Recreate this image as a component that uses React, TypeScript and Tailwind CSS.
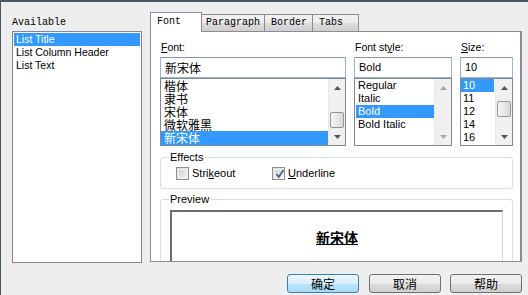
import React from "react";

const UI = "font-['Liberation_Sans','Noto_Sans_CJK_SC',sans-serif] text-[10.5px] text-black";
const CJK = "font-['Noto_Sans_CJK_SC',sans-serif] text-[12px]";
const MONO = "font-['Liberation_Mono',monospace] text-[10px] text-black";

function Arrow({ up, disabled }: { up?: boolean; disabled?: boolean }) {
  return (
    <div className="h-[17px] flex items-center justify-center">
      <svg width="7" height="4" viewBox="0 0 7 4">
        <path d={up ? "M3.5 0 L7 4 L0 4 Z" : "M0 0 L7 0 L3.5 4 Z"} fill={disabled ? "#a8a8a8" : "#555555"} />
      </svg>
    </div>
  );
}

function Scrollbar({ thumb, disabled }: { thumb?: string; disabled?: boolean }) {
  return (
    <div className="relative w-[17px] h-full shrink-0 bg-[#f0f0f0] border-l border-[#e9e9e9] flex flex-col justify-between">
      <Arrow up disabled={disabled} />
      {thumb && (
        <div
          className={
            "absolute left-[1px] right-[1px] rounded-[2px] border border-[#959595] bg-[linear-gradient(to_right,#f5f5f5,#e4e4e4_60%,#d9d9d9)] " +
            thumb
          }
        />
      )}
      <Arrow disabled={disabled} />
    </div>
  );
}

function Row({ children, selected, className }: { children: React.ReactNode; selected?: boolean; className?: string }) {
  return (
    <div
      className={
        "h-[13px] leading-[13px] whitespace-nowrap " +
        (selected ? "bg-[#3399ff] text-white " : "text-black ") +
        (className ?? "")
      }
    >
      {children}
    </div>
  );
}

function Label({ children }: { children: React.ReactNode }) {
  return <div className={UI + " h-[25px] pt-[9px] leading-[12px] pl-[1px]"}>{children}</div>;
}

function Input({ children, cjk }: { children: React.ReactNode; cjk?: boolean }) {
  return (
    <div
      className={
        "h-[21px] border border-[#98b4d0] border-t-[#7f9ab8] rounded-[1px] bg-white pl-[4px] flex items-center " +
        (cjk ? CJK : UI + " text-[11px]")
      }
    >
      {children}
    </div>
  );
}

function Checkbox({ checked }: { checked?: boolean }) {
  return (
    <div className="w-[13px] h-[13px] border border-[#8e8f8f] bg-[linear-gradient(135deg,#dcdcdc,#f6f6f6)] p-[1px] shrink-0">
      <div className="w-full h-full border border-[#f4f4f4] bg-[linear-gradient(135deg,#cfcfcf,#f2f2f2)] relative">
        {checked && (
          <svg className="absolute left-[0px] top-[-1px]" width="10" height="10" viewBox="0 0 10 10">
            <path d="M1.5 5 L3.8 8 L8.5 1" stroke="#4a5f97" strokeWidth="1.8" fill="none" />
          </svg>
        )}
      </div>
    </div>
  );
}

function Button({ children, primary, className }: { children: React.ReactNode; primary?: boolean; className?: string }) {
  return (
    <div
      className={
        CJK +
        " w-[72px] h-[19px] rounded-[3px] border flex items-center justify-center leading-none text-black " +
        (primary
          ? "border-[#3c7fb1] bg-[linear-gradient(to_bottom,#eaf6fd_0%,#d9f0fc_50%,#bee6fd_51%,#a7d9f5_100%)] "
          : "border-[#707070] bg-[linear-gradient(to_bottom,#f2f2f2_0%,#ebebeb_50%,#dddddd_51%,#cfcfcf_100%)] ") +
        (className ?? "")
      }
    >
      {children}
    </div>
  );
}

export default function App() {
  return (
    <div className="w-[528px] h-[295px] bg-[#eeeeee] border-t-2 border-l border-[#4b5967] overflow-hidden flex flex-col">
      <div className="mt-[10px] ml-[11px] flex gap-[8px]">
        {/* Left column */}
        <div className="w-[130px] flex flex-col">
          <div className={MONO + " h-[19px] leading-[19px] pt-[1px]"}>Available</div>
          <div className={UI + " h-[232px] border border-[#828790] bg-white p-[1px]"}>
            <Row selected className="pl-[2px]">List Title</Row>
            <Row className="pl-[2px]">List Column Header</Row>
            <Row className="pl-[2px]">List Text</Row>
          </div>
        </div>

        {/* Tab control */}
        <div className="w-[372px] flex flex-col">
          <div className={MONO + " h-[19px] flex items-end"}>
            <div className="relative z-10 -mb-px w-[52px] h-[20px] bg-white border border-b-0 border-[#898c95] pl-[6px] pt-[3px] leading-[12px]">
              Font
            </div>
            <div className="w-[63px] h-[17px] border border-b-0 border-l-0 border-[#898c95] bg-[linear-gradient(to_bottom,#f2f2f2,#ebebeb_50%,#dddddd_51%,#cfcfcf)] pl-[4px] leading-[16px]">
              Paragraph
            </div>
            <div className="w-[48px] h-[17px] border border-b-0 border-l-0 border-[#898c95] bg-[linear-gradient(to_bottom,#f2f2f2,#ebebeb_50%,#dddddd_51%,#cfcfcf)] pl-[6px] leading-[16px]">
              Border
            </div>
            <div className="w-[46px] h-[17px] border border-b-0 border-l-0 border-[#898c95] bg-[linear-gradient(to_bottom,#f2f2f2,#ebebeb_50%,#dddddd_51%,#cfcfcf)] pl-[6px] leading-[16px]">
              Tabs
            </div>
          </div>
          <div className="h-[231px] border border-r-2 border-[#898c95] bg-white overflow-hidden pl-[9px] pr-[7px]">
            <div className="flex gap-[8px]">
              {/* Font */}
              <div className="w-[186px] flex flex-col">
                <Label>
                  <span className="underline">F</span>ont:
                </Label>
                <Input cjk>新宋体</Input>
                <div className={CJK + " h-[68px] border border-[#828790] flex"}>
                  <div className="flex-1">
                    <Row className="pl-[3px]">楷体</Row>
                    <Row className="pl-[3px]">隶书</Row>
                    <Row className="pl-[3px]">宋体</Row>
                    <Row className="pl-[3px]">微软雅黑</Row>
                    <Row selected className="pl-[3px] h-[14px]">新宋体</Row>
                  </div>
                  <Scrollbar thumb="top-[33px] h-[16px]" />
                </div>
              </div>
              {/* Style */}
              <div className="w-[98px] flex flex-col">
                <Label>
                  Font st<span className="underline">y</span>le:
                </Label>
                <Input>Bold</Input>
                <div className={UI + " text-[11px] h-[68px] border border-[#828790] flex"}>
                  <div className="flex-1 pl-[1px]">
                    <Row className="pl-[2px]">Regular</Row>
                    <Row className="pl-[2px]">Italic</Row>
                    <Row selected className="pl-[2px]">Bold</Row>
                    <Row className="pl-[2px]">Bold Italic</Row>
                  </div>
                  <Scrollbar disabled />
                </div>
              </div>
              {/* Size */}
              <div className="w-[53px] flex flex-col">
                <Label>
                  <span className="underline">S</span>ize:
                </Label>
                <Input>10</Input>
                <div className={UI + " text-[11px] h-[68px] border border-[#828790] flex"}>
                  <div className="flex-1 pr-[1px]">
                    <Row selected className="pl-[2px]">10</Row>
                    <Row className="pl-[2px]">11</Row>
                    <Row className="pl-[2px]">12</Row>
                    <Row className="pl-[2px]">14</Row>
                    <Row className="pl-[2px]">16</Row>
                  </div>
                  <Scrollbar thumb="top-[22px] h-[16px]" />
                </div>
              </div>
            </div>

            {/* Effects */}
            <div className={UI + " relative mt-[11px] w-[353px] h-[32px] border border-[#d5dfe5] rounded-[3px] flex items-center pl-[15px]"}>
              <div className="absolute -top-[7px] left-[8px] bg-white px-[1px] leading-[12px] text-[11px]">Effects</div>
              <div className="flex items-center gap-[3px] w-[96px] pt-[1px]">
                <Checkbox />
                <span className="text-[11px]">
                  Stri<span className="underline">k</span>eout
                </span>
              </div>
              <div className="flex items-center gap-[3px] pt-[1px]">
                <Checkbox checked />
                <span className="text-[11px]">
                  <span className="underline">U</span>nderline
                </span>
              </div>
            </div>

            {/* Preview */}
            <div className={UI + " relative mt-[10px] w-[353px] h-[90px] border border-[#d5dfe5] rounded-[3px] pt-[10px] px-[9px]"}>
              <div className="absolute -top-[7px] left-[8px] bg-white px-[1px] leading-[12px] text-[11px]">Preview</div>
              <div className="h-[80px] border-t-2 border-l-2 border-r border-[#6e6e6e] border-r-[#d8d8d8] bg-white pt-[17px] text-center">
                <span className="font-['Noto_Sans_CJK_SC',sans-serif] text-[14px] font-bold underline leading-[16px]">新宋体</span>
              </div>
            </div>
          </div>
        </div>
      </div>

      {/* Buttons */}
      <div className="mt-[11px] flex justify-end pr-[6px]">
        <Button primary className="mr-[10px]">确定</Button>
        <Button className="mr-[9px]">取消</Button>
        <Button>帮助</Button>
      </div>
    </div>
  );
}
